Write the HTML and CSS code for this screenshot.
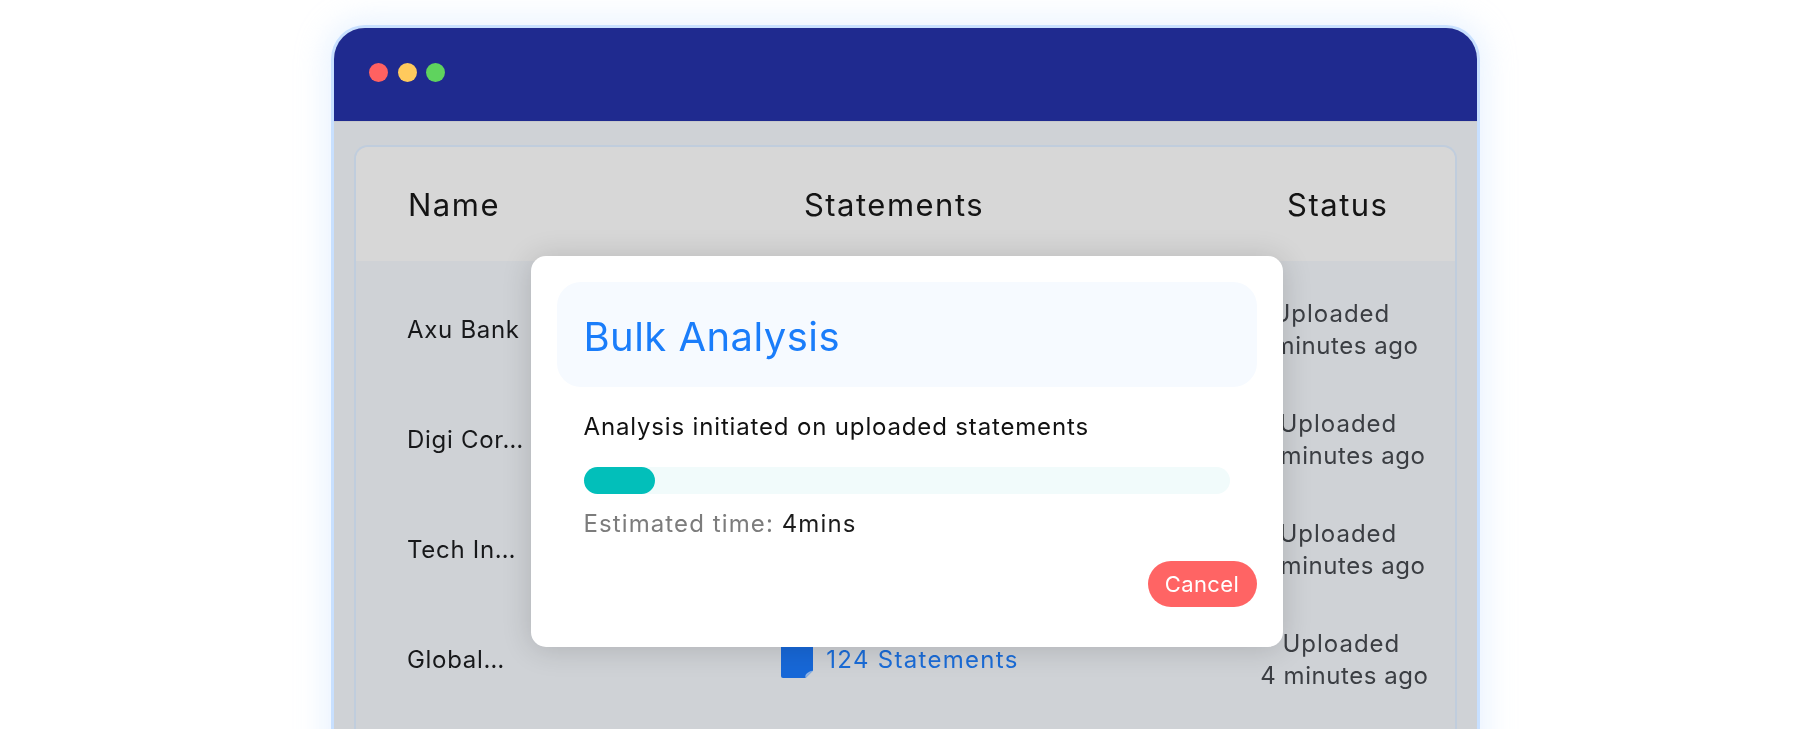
FILE: index.html
```html
<!DOCTYPE html>
<html lang="en">
<head>
<meta charset="utf-8">
<title>Bulk Analysis</title>
<link rel="stylesheet" href="styles.css">
</head>
<body>
<div class="window">
  <header class="titlebar">
    <span class="dot dot-red"></span>
    <span class="dot dot-yellow"></span>
    <span class="dot dot-green"></span>
  </header>
  <main class="content">
    <section class="card">
      <div class="row head">
        <div class="head-name">Name</div>
        <div class="head-statements">Statements</div>
        <div class="status-head">Status</div>
      </div>
      <div class="rows">
        <div class="row item">
          <div class="name">Axu Bank</div>
          <div class="statements"></div>
          <div class="status shift-a"><span class="up">Uploaded</span><br>4 minutes ago</div>
        </div>
        <div class="row item">
          <div class="name">Digi Cor…</div>
          <div class="statements"></div>
          <div class="status shift-b"><span class="up">Uploaded</span><br>4 minutes ago</div>
        </div>
        <div class="row item">
          <div class="name">Tech In…</div>
          <div class="statements"></div>
          <div class="status shift-b"><span class="up">Uploaded</span><br>4 minutes ago</div>
        </div>
        <div class="row item">
          <div class="name">Global…</div>
          <div class="statements"><svg class="doc" viewBox="0 0 32 38"><path d="M2 0h28a2 2 0 0 1 2 2v28.500L24.500 38H2a2 2 0 0 1-2-2V2a2 2 0 0 1 2-2z" fill="#1768d8"/><path d="M32 30.500 24.500 38c-.6-2.400.2-3.800 1.800-5 1.600-1.200 3.200-2 5.700-2.500z" fill="#8fb3e4"/></svg><span>124 Statements</span></div>
          <div class="status shift-c"><span class="up">Uploaded</span><br>4 minutes ago</div>
        </div>
      </div>
    </section>
  </main>
  <div class="modal">
    <div class="modal-head"><h1>Bulk Analysis</h1></div>
    <div class="modal-body">
      <p class="message">Analysis initiated on uploaded statements</p>
      <div class="track"><div class="fill"></div></div>
      <p class="estimate">Estimated time: <span>4mins</span></p>
    </div>
    <div class="modal-actions"><button class="cancel" type="button">Cancel</button></div>
  </div>
</div>
</body>
</html>
```
FILE: styles.css
```css
* { box-sizing: border-box; }
html, body { margin: 0; height: 729px; overflow: hidden; background: #fff; }
body { padding: 25px 0 0 331px; font-family: Inter, "Liberation Sans", sans-serif; color: #1a1a1a; }
.window {
  position: relative;
  width: 1149px;
  height: 740px;
  border: 3px solid #c8e0ff;
  border-bottom: 0;
  border-radius: 34px 34px 0 0;
  background: #cfd2d6;
  box-shadow: 0 0 28px 8px rgba(195, 222, 255, .34);
  filter: blur(.45px);
}
.titlebar {
  display: flex;
  align-items: center;
  gap: 9.500px;
  height: 94px;
  padding: 0 0 4px 35px;
  background: #1f2a8f;
  border-radius: 31px 31px 0 0;
  border-bottom: 1px solid #2a3192;
}
.dot { width: 19px; height: 19px; border-radius: 50%; }
.dot-red { background: #ff6161; }
.dot-yellow { background: #ffca5d; }
.dot-green { background: #5fd35e; }
.content { padding: 23px 20.500px 0 20px; border-top: 1px solid #c6c8cb; margin-top: -1px; }
.card {
  height: 620px;
  border: 2px solid #c0cddd;
  border-bottom: 0;
  border-radius: 14px 14px 0 0;
  overflow: hidden;
}
.row {
  display: grid;
  grid-template-columns: 322px 342px 1fr;
  align-items: center;
  padding-left: 51px;
}
.head {
  height: 114px;
  background: #d7d7d7;
  font-size: 31px;
  letter-spacing: 1.5px;
  color: #141414;
}
.head-name { padding-left: 1px; }
.head-statements { text-align: center; padding-right: 12px; }
.status-head { justify-self: end; margin-right: 66px; }
.rows { padding-top: 14px; }
.item { height: 110px; font-size: 24px; }
.name { padding-bottom: 2px; letter-spacing: .7px; color: #17181a; }
.statements {
  display: flex;
  align-items: center;
  justify-content: center;
  gap: 13px;
  padding-bottom: 2px;
  color: #1a6cd8;
  letter-spacing: 1.3px;
}
.doc { width: 32px; height: 38px; flex: none; }
.status {
  justify-self: end;
  text-align: center;
  line-height: 32.500px;
  letter-spacing: .55px;
  color: #3b3e43;
}
.up { display: inline-block; padding-right: 6px; letter-spacing: 1px; }
.shift-a { margin-right: 36px; }
.shift-b { margin-right: 29px; }
.shift-c { margin-right: 26px; }
.modal {
  position: absolute;
  top: 228px;
  left: 196.500px;
  width: 752px;
  height: 391px;
  padding: 26px 26px 0;
  background: #fff;
  border-radius: 15px;
  box-shadow: 0 2px 30px rgba(0, 0, 0, .16);
}
.modal-head {
  display: flex;
  align-items: center;
  height: 105px;
  padding: 3px 0 0 27px;
  background: #f6faff;
  border-radius: 24px;
}
h1 { margin: 0; font-size: 40px; font-weight: 400; letter-spacing: .45px; color: #1a7dfa; }
.modal-body { padding: 0 27px; }
.message { margin: 24px 0 0; height: 32px; font-size: 24px; line-height: 32px; letter-spacing: .84px; color: #111; }
.track { height: 27px; margin-top: 24px; background: #f1fbfb; border-radius: 14px; }
.fill { width: 71px; height: 27px; background: #02bfba; border-radius: 14px; }
.estimate { margin: 14px 0 0; height: 32px; font-size: 24px; line-height: 32px; letter-spacing: 1.1px; color: #7c7c7c; }
.estimate span { color: #1c1c1c; }
.modal-actions { display: flex; justify-content: flex-end; margin-top: 21px; }
.cancel {
  width: 109px;
  height: 46px;
  padding: 0;
  border: 0;
  border-radius: 23px;
  background: #ff6464;
  color: #fff;
  font: 400 22px Inter, "Liberation Sans", sans-serif;
  letter-spacing: .4px;
}
```
